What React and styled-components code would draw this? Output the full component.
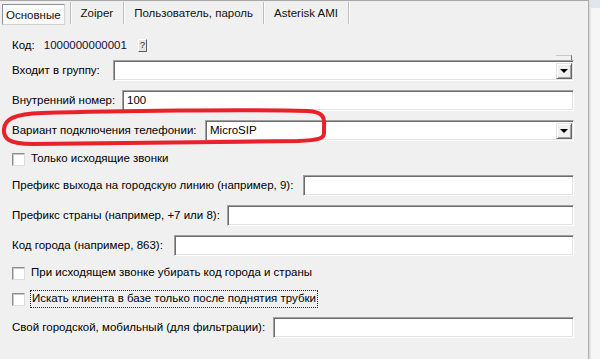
import React from "react";
import styled, { createGlobalStyle } from "styled-components";

const Global = createGlobalStyle`
  html, body { margin: 0; padding: 0; background: #f0f0f0; }
  body { font-family: "Liberation Sans", Arial, sans-serif; font-size: 11.5px; color: #000; }
`;

const Window = styled.div`
  width: 600px;
  height: 359px;
  display: flex;
  background: #f0f0f0;
  overflow: hidden;
`;

const Panel = styled.div`
  position: relative;
  width: 588px;
  flex: none;
  display: flex;
  flex-direction: column;
  border-top: 1px solid #a7a7a7;
  box-sizing: border-box;
`;

const Edge = styled.div`
  flex: 1;
  border-left: 1px solid #b0b0b0;
  box-shadow: inset 1px 0 #d9d9d9, inset 2px 0 #e6e6e6;
  background: linear-gradient(#dfe6ee 0 8px, #f6f6f7 8px);
`;

const TabBar = styled.div`
  display: flex;
  height: 23px;
  padding-top: 1px;
  box-sizing: border-box;
`;

const Tab = styled.div`
  display: flex;
  align-items: ${(p) => (p.$active ? "flex-start" : "center")};
  padding: ${(p) => (p.$active ? "2px 5px 0 2px" : "0 10px")};
  border-right: 1px solid #bdbdbd;
  box-shadow: 1px 0 #fbfbfb;
  color: #111;
  white-space: nowrap;
`;

const TabFace = styled.span`
  display: flex;
  align-items: center;
  height: 19px;
  padding: ${(p) => (p.$active ? "0 3px" : "0")};
  background: ${(p) => (p.$active ? "#fbfbfb" : "transparent")};
  border: ${(p) => (p.$active ? "1px solid" : "0")};
  border-color: #8f8f8f #d2d2d2 #d2d2d2 #8f8f8f;
`;

const Form = styled.div`
  display: flex;
  flex-direction: column;
  padding: 0 14px 0 12px;
`;

const Row = styled.div`
  display: grid;
  grid-template-columns: ${(p) => p.$label}px 1fr;
  align-items: center;
  height: 21px;
  margin-top: ${(p) => p.$mt}px;
`;

const Label = styled.span`
  white-space: nowrap;
  padding-bottom: 2px;
`;

const CodeRow = styled.div`
  display: flex;
  align-items: center;
  height: 20px;
  margin-top: ${(p) => p.$mt}px;
`;

const CodeValue = styled.span`
  margin-left: 9px;
  color: #101030;
`;

const HelpButton = styled.span`
  margin-left: 11px;
  width: 9px;
  height: 13px;
  box-sizing: border-box;
  background: #e4e4e4;
  border: 1px solid;
  border-color: #fff #5e5e5e #5e5e5e #fff;
  font-size: 9px;
  line-height: 11px;
  text-align: center;
  color: #222;
`;

const sunken = `
  box-sizing: border-box;
  height: 21px;
  background: #fff;
  border: 1px solid;
  border-color: #a0a0a0 #fff #fff #a0a0a0;
  box-shadow: inset 1px 1px #6c6c6c, inset -1px -1px #e3e3e3;
`;

const Input = styled.div`
  ${sunken}
  padding: 3px 0 0 4px;
  white-space: nowrap;
`;

const Combo = styled.div`
  ${sunken}
  display: flex;
  align-items: stretch;
  padding: 2px 1px 1px 2px;
`;

const ComboText = styled.span`
  flex: 1;
  padding: 1px 0 0 2px;
`;

const DropButton = styled.span`
  width: 16px;
  box-sizing: border-box;
  display: flex;
  align-items: center;
  justify-content: center;
  background: #f0f0f0;
  border: 1px solid;
  border-color: #e3e3e3 #696969 #696969 #e3e3e3;
  box-shadow: inset 1px 1px #fff, inset -1px -1px #a0a0a0;
`;

const Arrow = styled.span`
  width: 0;
  height: 0;
  border-left: 4px solid transparent;
  border-right: 4px solid transparent;
  border-top: 4px solid #000;
`;

const CheckRow = styled.div`
  display: flex;
  align-items: center;
  height: 20px;
  margin-top: ${(p) => p.$mt}px;
`;

const Box = styled.span`
  width: 13px;
  height: 13px;
  box-sizing: border-box;
  background: #fff;
  border: 1px solid;
  border-color: #8e8e8e #dcdcdc #dcdcdc #8e8e8e;
  box-shadow: inset 1px 1px #c8c8c8;
  flex: none;
`;

const CheckText = styled.span`
  margin-left: ${(p) => (p.$focus ? "5px" : "6px")};
  padding: 0 ${(p) => (p.$focus ? "1px" : "0")} 1px;
  border: ${(p) => (p.$focus ? "1px dotted #222" : "0")};
  white-space: nowrap;
  line-height: 15px;
`;

const Stub = styled.span`
  position: absolute;
  left: 556px;
  top: 54px;
  width: 16px;
  height: 5px;
  border-top: 1px solid #c7c7c7;
  border-right: 1px solid #707070;
  box-sizing: border-box;
`;

const Highlight = styled.svg`
  position: absolute;
  left: 0;
  top: 0;
  pointer-events: none;
`;

const Field = ({ label, w, mt, value }) => (
  <Row $label={w} $mt={mt}>
    <Label>{label}</Label>
    <Input>{value}</Input>
  </Row>
);

const Select = ({ label, w, mt, value }) => (
  <Row $label={w} $mt={mt}>
    <Label>{label}</Label>
    <Combo>
      <ComboText>{value}</ComboText>
      <DropButton>
        <Arrow />
      </DropButton>
    </Combo>
  </Row>
);

const Check = ({ mt, children, focus }) => (
  <CheckRow $mt={mt}>
    <Box />
    <CheckText $focus={focus}>{children}</CheckText>
  </CheckRow>
);

export default function App() {
  return (
    <>
      <Global />
      <Window>
        <Panel>
          <TabBar>
            <Tab $active>
              <TabFace $active>Основные</TabFace>
            </Tab>
            <Tab>
              <TabFace>Zoiper</TabFace>
            </Tab>
            <Tab>
              <TabFace>Пользователь, пароль</TabFace>
            </Tab>
            <Tab>
              <TabFace>Asterisk AMI</TabFace>
            </Tab>
          </TabBar>
          <Form>
            <CodeRow $mt={11}>
              <span>Код:</span>
              <CodeValue>1000000000001</CodeValue>
              <HelpButton>?</HelpButton>
            </CodeRow>
            <Select label="Входит в группу:" w={101} mt={5} value="" />
            <Field label="Внутренний номер:" w={110} mt={9} value="100" />
            <Select label="Вариант подключения телефонии:" w={193} mt={9} value="MicroSIP" />
            <Check mt={8}>Только исходящие звонки</Check>
            <Field label="Префикс выхода на городскую линию (например, 9):" w={291} mt={6} value="" />
            <Field label="Префикс страны (например, +7 или 8):" w={215} mt={9} value="" />
            <Field label="Код города (например, 863):" w={162} mt={9} value="" />
            <Check mt={7}>При исходящем звонке убирать код города и страны</Check>
            <Check mt={6} focus>
              Искать клиента в базе только после поднятия трубки
            </Check>
            <Field label="Свой городской, мобильный (для фильтрации):" w={261} mt={8} value="" />
          </Form>
          <Stub />
          <Highlight width="340" height="150" viewBox="0 0 340 150">
            <path
              d="M 42 112 C 110 110 250 108 308 110 C 323 111 325 116 324 126 L 324 132 C 324 138 318 139 298 140 C 200 141 90 143 32 143 C 10 143 3 138 4 128 C 5 118 14 113 42 112 Z"
              fill="none"
              stroke="#e8212b"
              strokeWidth="4"
              strokeLinejoin="round"
            />
          </Highlight>
        </Panel>
        <Edge />
      </Window>
    </>
  );
}
